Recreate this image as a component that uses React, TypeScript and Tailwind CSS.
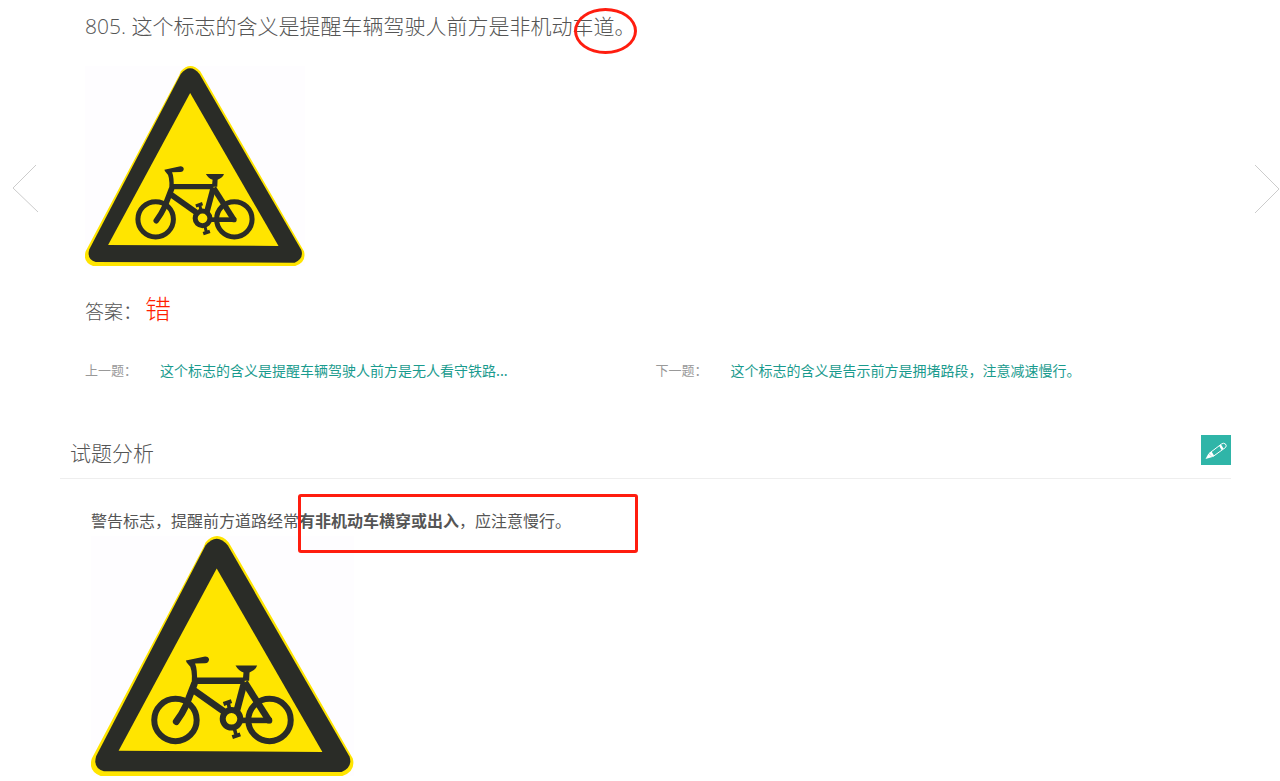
const BicycleSign = ({ className }: { className: string }) => {
  return (
    <svg
      viewBox="18 18 657 600"
      preserveAspectRatio="none"
      role="img"
      aria-label="注意非机动车"
      className={className}
    >
      <rect x="18" y="18" width="657" height="600" fill="#fefdff" />
      <path
        d="M304 34Q333 2 362 34L369 46L672 574Q680 606 646 618H42Q10 606 20 574L300 44Z"
        fill="#ffe500"
      />
      <path
        d="M304 42Q332 8 360 42L664 570Q672 596 644 608L50 606Q22 598 31 568Z"
        fill="#2a2c27"
      />
      <path d="M332 99L596 558L87 555Z" fill="#ffe500" />

      <g fill="none" stroke="#2a2c27" strokeWidth="15">
        <circle cx="229" cy="478" r="53" />
        <circle cx="464" cy="478" r="53" />
        <circle cx="369" cy="475" r="22" strokeWidth="15" />
        <path d="M231 482Q246 462 256 440L276 388" strokeWidth="17" strokeLinecap="round" />
        <path d="M277 380H402" strokeWidth="16" />
        <path d="M274 403L350 457" strokeWidth="17" />
        <path d="M401 384L382 456" strokeWidth="17" />
        <path d="M402 384L463 480" strokeWidth="17" />
        <path d="M392 479H466" strokeWidth="14" />
        <path d="M361 436L364 450M376 499L380 514" strokeWidth="9" />
        <path d="M349 438L369 431M371 521L391 514" strokeWidth="10" />
      </g>
      <path
        d="M255 329L303 319Q312 319 313 327Q312 336 303 336L278 337Q284 350 283 388L268 402Q273 362 266 345L257 334Z"
        fill="#2a2c27"
      />
      <path d="M379 342H433Q430 353 414 359L413 380H397L399 359Q387 356 379 342Z" fill="#2a2c27" />
      <circle cx="463" cy="479" r="8" fill="#2a2c27" />
    </svg>
  );
};

const PencilIcon = () => {
  return (
    <svg viewBox="0 0 30 30" className="size-[30px]" aria-hidden="true">
      <path d="M4.500 24L7.500 18.500L11.500 22Z" fill="#fff" />
      <path
        d="M8 18.500L20.500 9Q22.500 7.500 24.500 9Q26 11 24.500 12.500L12 21.500"
        fill="none"
        stroke="#fff"
        strokeWidth="1"
      />
      <path d="M8 18.500L10.500 16.500L13 20.500L11.500 22Z" fill="#fff" />
      <path d="M18 10.500L20 9.500L22.500 13.500L20.500 15Z" fill="#fff" />
    </svg>
  );
};

const App = () => {
  return (
    <div className="flex items-start bg-white font-['Noto_Sans_CJK_SC',sans-serif] text-[#555]">
      <button type="button" aria-label="上一题" className="mt-[164px] w-[60px] shrink-0 pl-3">
        <svg viewBox="0 0 27 50" className="h-[50px] w-[27px]" fill="none" stroke="#ccc">
          <path d="M24 1L1 24L26 48" />
        </svg>
      </button>

      <main className="min-w-0 flex-1">
        <section className="pt-[11px] pr-[5px] pl-[25px]">
          <h1 className="font-['Open_Sans','Noto_Sans_CJK_SC',sans-serif] text-[21px] leading-[30px] font-light">
            805. 这个标志的含义是提醒车辆驾驶人前方是非机动
            <span className="relative">
              车道。
              <span className="absolute -top-1 left-0.5 h-[46px] w-[63px] rounded-[50%] border-3 border-[#ff1d0f]" />
            </span>
          </h1>
          <BicycleSign className="mt-[25px] h-[200px] w-[220px]" />

          <p className="mt-6 flex h-10 items-baseline text-[19px] leading-10 font-light">
            答案：
            <strong className="ml-[3px] text-[26px] leading-9 font-light text-[#ff1e00]">错</strong>
          </p>

          <nav className="mt-[30px] grid grid-cols-2 text-[14px] leading-5">
            <div className="flex">
              <span className="w-[75px] text-[13px] text-[#999]">上一题：</span>
              <a href="#prev" className="text-[#1a9b8e]">
                这个标志的含义是提醒车辆驾驶人前方是无人看守铁路...
              </a>
            </div>
            <div className="flex">
              <span className="w-[75px] text-[13px] text-[#999]">下一题：</span>
              <a href="#next" className="text-[#1a9b8e]">
                这个标志的含义是告示前方是拥堵路段，注意减速慢行。
              </a>
            </div>
          </nav>
        </section>

        <section className="mt-[55px]">
          <header className="flex h-11 items-start justify-between border-b border-[#eee] pl-[10px]">
            <h2 className="text-[21px] leading-[34px] font-light">试题分析</h2>
            <button type="button" aria-label="编辑" className="bg-[#2fb5a8]">
              <PencilIcon />
            </button>
          </header>

          <div className="pt-[29px] pl-[31px]">
            <p className="pb-1 text-[16px] leading-6">
              警告标志，提醒前方道路经常
              <span className="relative">
                <b className="font-bold">有非机动车横穿或出入</b>
                <span className="absolute -top-[14px] -left-px h-[59px] w-[340px] rounded-[3px] border-3 border-[#ff1d0f]" />
              </span>
              ，应注意慢行。
            </p>
            <BicycleSign className="h-[240px] w-[263px]" />
          </div>
        </section>
      </main>

      <button type="button" aria-label="下一题" className="mt-[164px] w-[49px] shrink-0 pl-[22px]">
        <svg viewBox="0 0 27 50" className="h-[50px] w-[27px]" fill="none" stroke="#ccc">
          <path d="M2 1L26 25L2 49" />
        </svg>
      </button>
    </div>
  );
};

export default App;
